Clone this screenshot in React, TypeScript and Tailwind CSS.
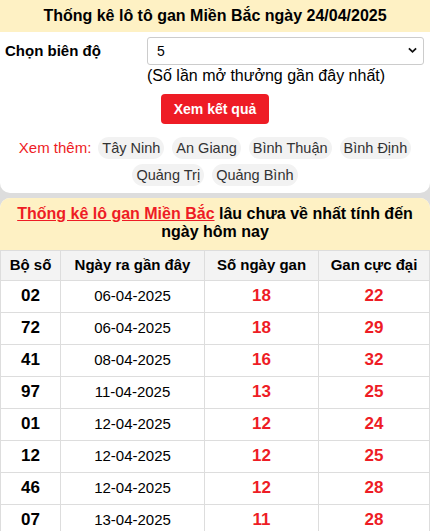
import React from 'react';

const rows = [
	{ so: '02', ngay: '06-04-2025', gan: 18, max: 22 },
	{ so: '72', ngay: '06-04-2025', gan: 18, max: 29 },
	{ so: '41', ngay: '08-04-2025', gan: 16, max: 32 },
	{ so: '97', ngay: '11-04-2025', gan: 13, max: 25 },
	{ so: '01', ngay: '12-04-2025', gan: 12, max: 24 },
	{ so: '12', ngay: '12-04-2025', gan: 12, max: 25 },
	{ so: '46', ngay: '12-04-2025', gan: 12, max: 28 },
	{ so: '07', ngay: '13-04-2025', gan: 11, max: 28 },
];

const provinces = ['Tây Ninh', 'An Giang', 'Bình Thuận', 'Bình Định'];
const provinces2 = ['Quảng Trị', 'Quảng Bình'];

export default function App() {
	return (
		<div className="min-h-[531px] bg-[#dddddd] font-['Liberation_Sans',Arial,sans-serif] text-black">
			{/* Form card */}
			<div className="bg-white rounded-b-[10px] pb-[7px]">
				<h1 className="bg-[#fef1c4] h-[32px] text-center font-bold text-[16px] leading-[32px]">
					Thống kê lô tô gan Miền Bắc ngày 24/04/2025
				</h1>
				<div className="flex px-[5px] pt-[5px]">
					<label className="w-[142px] shrink-0 pt-[5px] font-bold text-[15px] leading-[18px]">Chọn biên độ</label>
					<div className="flex-1 pr-[1px]">
						<div className="relative">
							<select className="w-full h-[28px] appearance-none border border-[#cccccc] rounded-[3px] bg-white pl-[9px] text-[14px] outline-none">
								<option>5</option>
							</select>
							<svg className="absolute right-[7px] top-[10px] w-[9px] h-[7px] pointer-events-none" viewBox="0 0 10 7">
								<path d="M1 1.2 L5 5 L9 1.2" fill="none" stroke="#111" strokeWidth="2" />
							</svg>
						</div>
						<div className="text-[16px] leading-[19px] mt-[1px]">(Số lần mở thưởng gần đây nhất)</div>
					</div>
				</div>
				<div className="flex justify-center mt-[9px]">
					<button className="w-[108px] h-[30px] rounded-[4px] bg-[#ee1c25] text-white font-bold text-[14px]">Xem kết quả</button>
				</div>
				<div className="flex flex-col items-center gap-[4px] mt-[13px]">
					<div className="flex items-center gap-x-[8px]">
						<span className="text-[#ee1c25] text-[15px] mr-[-1px]">Xem thêm:</span>
						{provinces.map((p) => (
							<span key={p} className="h-[22px] leading-[22px] px-[4px] rounded-full bg-[#f2f2f2] text-[#333] text-[14.5px]">
								{p}
							</span>
						))}
					</div>
					<div className="flex items-center gap-x-[8px]">
						{provinces2.map((p) => (
							<span key={p} className="h-[22px] leading-[22px] px-[4px] rounded-full bg-[#f2f2f2] text-[#333] text-[14.5px]">
								{p}
							</span>
						))}
					</div>
				</div>
			</div>

			{/* Stats card */}
			<div className="mt-[5px] bg-white rounded-t-[10px] overflow-hidden">
				<h2 className="bg-[#fef1c4] pt-[7px] pb-[9px] px-[8px] text-center font-bold text-[16px] leading-[18px]">
					<a className="text-[#ee1c25] underline">Thống kê lô gan Miền Bắc</a> lâu chưa về nhất tính đến ngày hôm nay
				</h2>
				<table className="w-full border-collapse text-center">
					<thead>
						<tr className="bg-[#f3f3f3] h-[30px] text-[15px] font-bold">
							<th className="w-[60px] border border-[#dddddd]">Bộ số</th>
							<th className="w-[144px] border border-[#dddddd]">Ngày ra gần đây</th>
							<th className="w-[114px] border border-[#dddddd]">Số ngày gan</th>
							<th className="border border-[#dddddd]">Gan cực đại</th>
						</tr>
					</thead>
					<tbody>
						{rows.map((r, i) => (
							<tr key={i} className="h-[32px]">
								<td className="border border-[#dddddd] font-bold text-[17px]">{r.so}</td>
								<td className="border border-[#dddddd] text-[15px]">{r.ngay}</td>
								<td className="border border-[#dddddd] font-bold text-[17px] text-[#ee1c25]">{r.gan}</td>
								<td className="border border-[#dddddd] font-bold text-[17px] text-[#ee1c25]">{r.max}</td>
							</tr>
						))}
					</tbody>
				</table>
			</div>
		</div>
	);
}
